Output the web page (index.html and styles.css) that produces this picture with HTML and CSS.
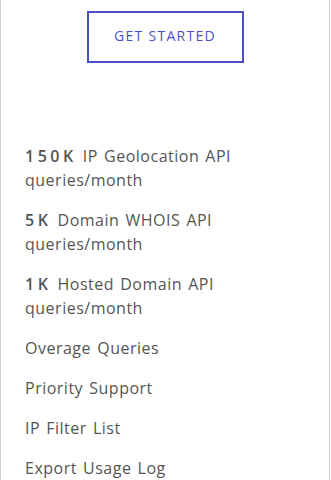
FILE: index.html
```html
<!DOCTYPE html>
<html lang="en">
<head>
    <meta charset="UTF-8">
    <meta name="viewport" content="width=device-width, initial-scale=1.0">
    <title>Plan</title>
    <link rel="stylesheet" href="styles.css">
</head>
<body>
    <div class="plan-card">
        <div class="plan-action">
            <a class="btn-outline" href="#">GET STARTED</a>
        </div>

        <ul class="feature-list">
            <li><b>150K</b> IP Geolocation API queries/month</li>
            <li><b>5K</b> Domain WHOIS API queries/month</li>
            <li><b>1K</b> Hosted Domain API queries/month</li>
            <li>Overage Queries</li>
            <li>Priority Support</li>
            <li>IP Filter List</li>
            <li>Export Usage Log</li>
        </ul>
    </div>
</body>
</html>
```

FILE: styles.css
```css
body {
    margin: 0;
    font-family: "Open Sans", Lato, sans-serif;
    background: #fff;
}
.plan-card {
    width: 328px;
    min-height: 480px;
    border-left: 1px solid #cfcfcf;
    border-right: 1px solid #cfcfcf;
    box-sizing: content-box;
}
.plan-action {
    display: flex;
    justify-content: center;
    padding-top: 11px;
}
.btn-outline {
    display: flex;
    align-items: center;
    justify-content: center;
    width: 157px;
    height: 52px;
    padding-bottom: 3px;
    box-sizing: border-box;
    border: 2px solid #4a50c6;
    color: #4a50c6;
    font-size: 14px;
    letter-spacing: 1.3px;
    text-decoration: none;
}
.feature-list {
    list-style: none;
    margin: 81px 0 0;
    padding: 0 20px 0 24px;
    color: #555;
    font-size: 16px;
    line-height: 24px;
    letter-spacing: 0.5px;
    word-spacing: 1.5px;
}
.feature-list li {
    margin-bottom: 16px;
    width: 250px;
}
.feature-list b {
    font-weight: 600;
    letter-spacing: 3.5px;
}
```
